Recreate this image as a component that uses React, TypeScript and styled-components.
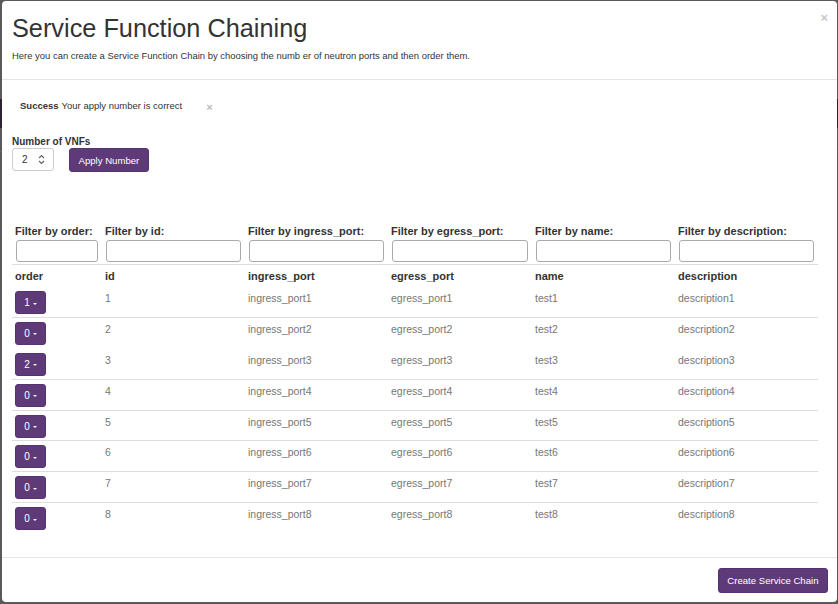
import React from "react";
import styled, { createGlobalStyle } from "styled-components";

const GlobalStyle = createGlobalStyle`
  html, body {
    margin: 0;
    padding: 0;
    height: 100%;
  }
  body {
    font-family: "Liberation Sans", Arial, sans-serif;
    background: linear-gradient(
      to bottom,
      #5a5a5a 0,
      #5a5a5a 99px,
      #2c2234 99px,
      #2c2234 128px,
      #5a5a5a 128px,
      #5a5a5a 151px,
      #6a6a6a 151px,
      #6a6a6a 152px,
      #5a5a5a 152px
    );
  }
  * { box-sizing: border-box; }
`;

const PURPLE = "#5f3a79";

const Backdrop = styled.div`
  height: 604px;
  padding: 1px 1px 2px 2px;
  display: flex;
`;

const Modal = styled.div`
  flex: 1;
  background: #fff;
  border-radius: 4px;
  display: flex;
  flex-direction: column;
  color: #333;
`;

const Header = styled.div`
  position: relative;
  padding: 12.5px 10px 17.5px 10px;
  border-bottom: 1px solid #e5e5e5;
`;

const Title = styled.h1`
  margin: 0;
  font-size: 25.3px;
  line-height: 29px;
  font-weight: 400;
  color: #333;
`;

const Subtitle = styled.p`
  margin: 6px 0 0 0;
  font-size: 9.45px;
  line-height: 13px;
  color: #333;
`;

const CloseX = styled.span`
  position: absolute;
  top: 9px;
  right: 9px;
  font-size: 13px;
  font-weight: 700;
  color: #c8c8c8;
  line-height: 16px;
`;

const Body = styled.div`
  padding: 0 19px 0 10px;
  display: flex;
  flex-direction: column;
`;

const Alert = styled.div`
  margin-top: 16.5px;
  padding-left: 8px;
  font-size: 9.5px;
  line-height: 13px;
  display: flex;
  align-items: center;
`;

const AlertStrong = styled.strong`
  font-weight: 700;
  margin-right: 3px;
`;

const AlertClose = styled.span`
  margin-left: 24px;
  margin-top: 4px;
  font-size: 11px;
  font-weight: 700;
  color: #bcbcbc;
`;

const FieldLabel = styled.label`
  margin-top: 21px;
  font-size: 10px;
  font-weight: 700;
  line-height: 13px;
  display: block;
`;

const NumberRow = styled.div`
  display: flex;
  align-items: flex-start;
  gap: 15px;
  margin-top: 0.5px;
`;

const NumberBox = styled.div`
  width: 42px;
  height: 23px;
  border: 1px solid #cccccc;
  border-radius: 3px;
  display: flex;
  align-items: center;
  padding: 0 0 0 9px;
  font-size: 10px;
  color: #333;
  gap: 10px;
`;

const PurpleButton = styled.button<{ $h?: number }>`
  background: ${PURPLE};
  color: #fff;
  border: 1px solid #553370;
  border-radius: 3px;
  font-family: "Liberation Sans", Arial, sans-serif;
  font-size: 9.6px;
  height: ${(p) => p.$h ?? 24}px;
  padding: 0 8.5px;
  cursor: pointer;
`;

const Table = styled.table`
  margin-top: 52.5px;
  width: 806px;
  border-collapse: collapse;
  table-layout: fixed;
  font-size: 10.5px;
`;

const FilterCell = styled.th`
  padding: 0 3px 2px 3px;
  text-align: left;
  vertical-align: top;
  font-size: 11px;
  font-weight: 700;
  color: #333;
`;

const FilterLabel = styled.div`
  line-height: 13px;
  margin-bottom: 2.5px;
`;

const FilterInput = styled.input`
  display: block;
  width: calc(100% - 2px);
  margin-left: 1px;
  height: 22px;
  border: 1px solid #aaaaaa;
  border-radius: 3px;
  font-size: 11px;
`;

const HeadRow = styled.tr`
  border-top: 1px solid #dddddd;
`;

const HeadCell = styled.th`
  padding: 3.5px 3px 4.5px 3px;
  text-align: left;
  font-size: 11px;
  line-height: 14px;
  font-weight: 700;
  color: #333;
`;

const BodyRow = styled.tr<{ $line: boolean }>`
  border-bottom: 1px solid ${(p) => (p.$line ? "#dddddd" : "transparent")};
`;

const Cell = styled.td`
  padding: 4px 3px 2.9px 3px;
  vertical-align: top;
  color: #777;
  line-height: 14px;
  height: 29.9px;
`;

const OrderButton = styled.button`
  width: 31px;
  height: 23px;
  background: ${PURPLE};
  border: 1px solid #553370;
  border-radius: 3px;
  color: #fff;
  font-family: "Liberation Sans", Arial, sans-serif;
  font-size: 10px;
  display: flex;
  align-items: center;
  justify-content: center;
  padding: 0;
  gap: 3px;
  cursor: pointer;
`;

const Caret = styled.span`
  width: 0;
  height: 0;
  border-left: 2.5px solid transparent;
  border-right: 2.5px solid transparent;
  border-top: 2.5px solid #fff;
  margin-top: 2px;
`;

const Footer = styled.div`
  margin-top: auto;
  border-top: 1px solid #e5e5e5;
  padding: 10px 9px 9px 10px;
  display: flex;
  justify-content: flex-end;
`;

const Spinner = () => (
  <svg width="7" height="11" viewBox="0 0 7 11">
    <path d="M1 4 L3.5 1.5 L6 4" fill="none" stroke="#666" strokeWidth="1.2" />
    <path d="M1 7 L3.5 9.5 L6 7" fill="none" stroke="#666" strokeWidth="1.2" />
  </svg>
);

const rows = [
  { order: 1, id: 1 },
  { order: 0, id: 2 },
  { order: 2, id: 3 },
  { order: 0, id: 4 },
  { order: 0, id: 5 },
  { order: 0, id: 6 },
  { order: 0, id: 7 },
  { order: 0, id: 8 },
];

const columns = ["order", "id", "ingress_port", "egress_port", "name", "description"];
const widths = [90, 143, 143, 144, 143, 143];

export default function App() {
  return (
    <>
      <GlobalStyle />
      <Backdrop>
        <Modal>
          <Header>
            <Title>Service Function Chaining</Title>
            <Subtitle>
              Here you can create a Service Function Chain by choosing the numb er of neutron ports and
              then order them.
            </Subtitle>
            <CloseX>×</CloseX>
          </Header>
          <Body>
            <Alert>
              <AlertStrong>Success</AlertStrong> Your apply number is correct
              <AlertClose>×</AlertClose>
            </Alert>
            <FieldLabel>Number of VNFs</FieldLabel>
            <NumberRow>
              <NumberBox>
                2
                <Spinner />
              </NumberBox>
              <PurpleButton>Apply Number</PurpleButton>
            </NumberRow>
            <Table>
              <colgroup>
                {widths.map((w, i) => (
                  <col key={i} style={{ width: w }} />
                ))}
              </colgroup>
              <thead>
                <tr>
                  {columns.map((c) => (
                    <FilterCell key={c}>
                      <FilterLabel>Filter by {c}:</FilterLabel>
                      <FilterInput type="text" />
                    </FilterCell>
                  ))}
                </tr>
                <HeadRow>
                  {columns.map((c) => (
                    <HeadCell key={c}>{c}</HeadCell>
                  ))}
                </HeadRow>
              </thead>
              <tbody>
                {rows.map((r) => (
                  <BodyRow key={r.id} $line={r.id !== 2 && r.id !== 8}>
                    <Cell>
                      <OrderButton>
                        {r.order}
                        <Caret />
                      </OrderButton>
                    </Cell>
                    <Cell>{r.id}</Cell>
                    <Cell>ingress_port{r.id}</Cell>
                    <Cell>egress_port{r.id}</Cell>
                    <Cell>test{r.id}</Cell>
                    <Cell>description{r.id}</Cell>
                  </BodyRow>
                ))}
              </tbody>
            </Table>
          </Body>
          <Footer>
            <PurpleButton $h={25}>Create Service Chain</PurpleButton>
          </Footer>
        </Modal>
      </Backdrop>
    </>
  );
}
